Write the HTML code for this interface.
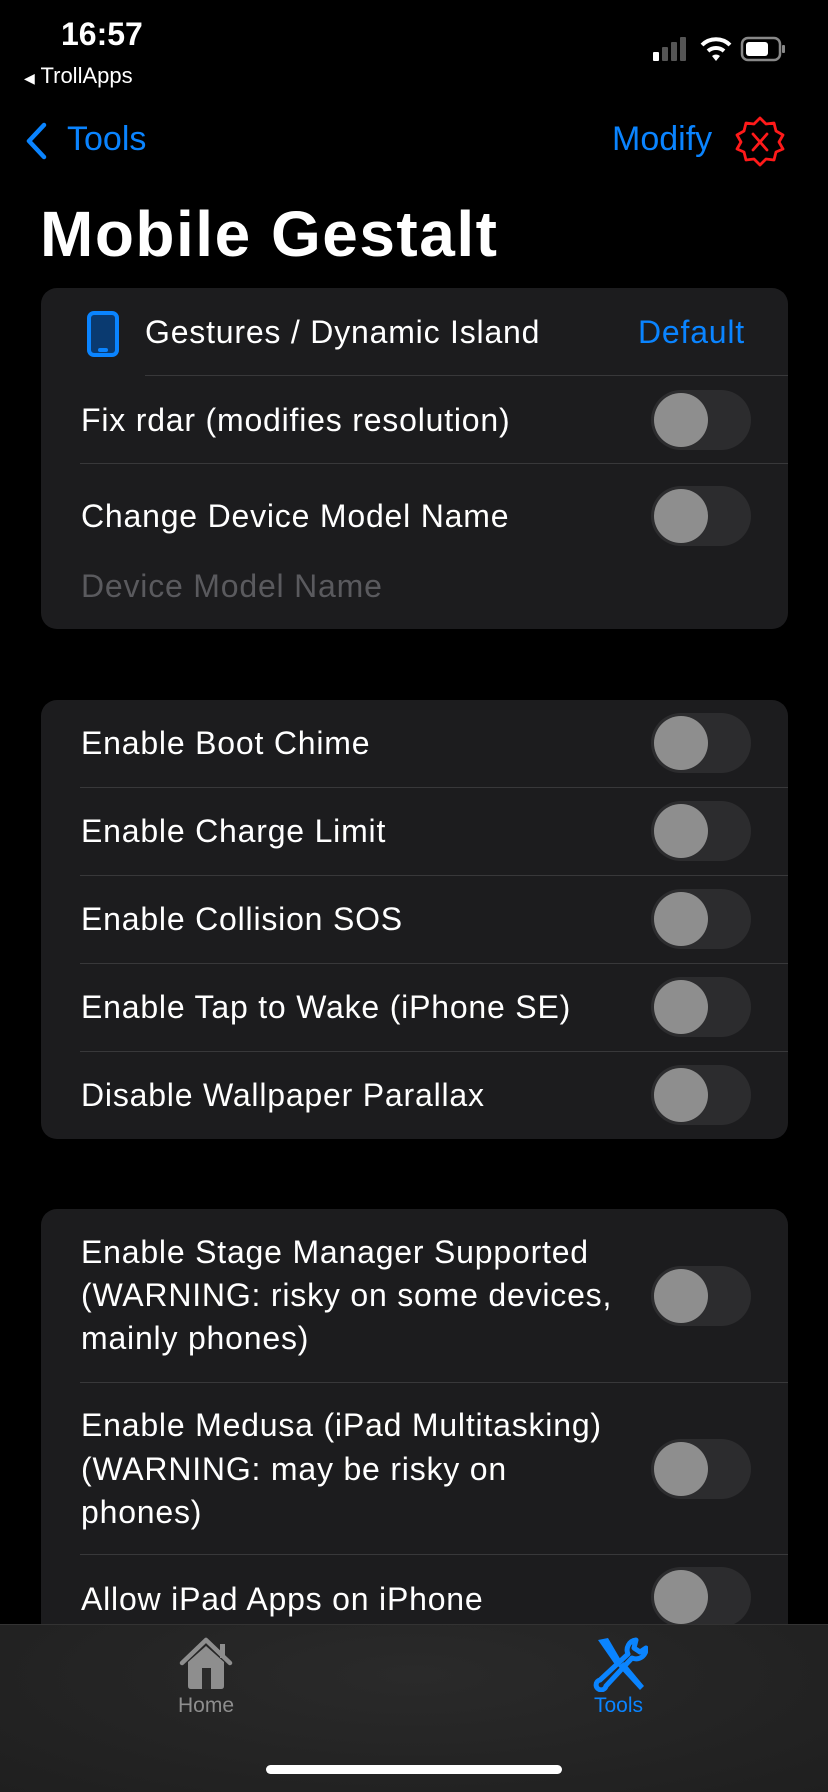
<!DOCTYPE html>
<html><head><meta charset="utf-8"><style>
*{margin:0;padding:0;box-sizing:border-box}
body{width:828px;height:1792px;background:#000;font-family:"Liberation Sans",sans-serif;color:#fff;position:relative;overflow:hidden}
.a{position:absolute;white-space:nowrap}
.card{position:absolute;left:41px;width:747px;background:#1c1c1e;border-radius:16px;overflow:hidden}
.t{position:absolute;left:40px;font-size:32px;line-height:44px;letter-spacing:0.8px;white-space:nowrap}
.sep{position:absolute;left:39px;right:0;height:1px;background:#38383a}
.tg{position:absolute;left:610px;width:100px;height:60px;border-radius:30px;background:#2c2c2e}
.tg::after{content:"";position:absolute;left:3px;top:3px;width:54px;height:54px;border-radius:50%;background:#8e8e8e}
</style></head><body>
<div class="a" style="left:61px;top:16px;font-size:32px;font-weight:bold">16:57</div>
<div class="a" style="left:24px;top:63px;font-size:22px"><span style="font-size:14px">◀</span> TrollApps</div>
<svg class="a" style="left:652px;top:36px" width="40" height="26"><rect x="1" y="16" width="6" height="9" rx="1" fill="#fff"/><rect x="10" y="11" width="6" height="14" rx="1" fill="#555"/><rect x="19" y="6" width="6" height="19" rx="1" fill="#555"/><rect x="28" y="1" width="6" height="24" rx="1" fill="#555"/></svg>
<svg class="a" style="left:700px;top:36px" width="32" height="26"><path d="M2 9 A20 20 0 0 1 30 9" stroke="#fff" stroke-width="4" fill="none"/><path d="M8 15 A12 12 0 0 1 24 15" stroke="#fff" stroke-width="4" fill="none"/><path d="M12 20 L16 25 L20 20 A6 6 0 0 0 12 20Z" fill="#fff"/></svg>
<svg class="a" style="left:740px;top:36px" width="48" height="26"><rect x="2" y="2" width="38" height="22" rx="6" stroke="#888" stroke-width="2.5" fill="none"/><rect x="6" y="6" width="22" height="14" rx="3" fill="#fff"/><rect x="42" y="9" width="3" height="8" rx="1" fill="#888"/></svg>
<svg class="a" style="left:24px;top:122px" width="24" height="38"><path d="M20 3 L5 19 L20 35" stroke="#0a84ff" stroke-width="4.5" fill="none" stroke-linecap="round" stroke-linejoin="round"/></svg>
<div class="a" style="left:67px;top:120px;font-size:34px;color:#0a84ff">Tools</div>
<div class="a" style="left:612px;top:120px;font-size:34px;color:#0a84ff">Modify</div>
<svg class="a" style="left:734px;top:115px" width="52" height="52" viewBox="0 0 52 52"><path d="M26 3 L32 9 L40 8 L42 16 L49 20 L45 27 L49 34 L42 37 L40 45 L32 44 L26 50 L20 44 L12 45 L10 37 L3 34 L7 27 L3 20 L10 16 L12 8 L20 9 Z" stroke="#ff1a1a" stroke-width="2.8" fill="none" stroke-linejoin="round"/><path d="M19 19 L33 35 M33 19 L19 35" stroke="#ff1a1a" stroke-width="2.8" stroke-linecap="round"/></svg>
<div class="a" style="left:40px;top:197px;font-size:64px;font-weight:bold;letter-spacing:1.5px">Mobile Gestalt</div>
<div class="card" style="top:288px;height:341px">
<svg class="a" style="left:46px;top:23px" width="32" height="46"><rect x="2" y="2" width="28" height="42" rx="5" fill="#0a3a70" stroke="#0a84ff" stroke-width="4"/><rect x="11" y="37" width="10" height="4" rx="2" fill="#0a84ff"/></svg>
<div class="t" style="left:104px;top:22px">Gestures / Dynamic Island</div>
<div class="t" style="left:597px;top:22px;color:#0a84ff">Default</div>
<div class="sep" style="top:87px;left:104px"></div>
<div class="t" style="top:110px">Fix rdar (modifies resolution)</div>
<div class="tg" style="top:102px"></div>
<div class="sep" style="top:175px"></div>
<div class="t" style="top:206px">Change Device Model Name</div>
<div class="tg" style="top:198px"></div>
<div class="t" style="top:276px;color:#5a5a5e">Device Model Name</div>
</div>
<div class="card" style="top:700px;height:439px">
<div class="t" style="top:21px">Enable Boot Chime</div><div class="tg" style="top:13px"></div>
<div class="sep" style="top:87px"></div>
<div class="t" style="top:109px">Enable Charge Limit</div><div class="tg" style="top:101px"></div>
<div class="sep" style="top:175px"></div>
<div class="t" style="top:197px">Enable Collision SOS</div><div class="tg" style="top:189px"></div>
<div class="sep" style="top:263px"></div>
<div class="t" style="top:285px">Enable Tap to Wake (iPhone SE)</div><div class="tg" style="top:277px"></div>
<div class="sep" style="top:351px"></div>
<div class="t" style="top:373px">Disable Wallpaper Parallax</div><div class="tg" style="top:365px"></div>
</div>
<div class="card" style="top:1209px;height:500px">
<div class="t" style="top:21px">Enable Stage Manager Supported</div>
<div class="t" style="top:64px">(WARNING: risky on some devices,</div>
<div class="t" style="top:107px">mainly phones)</div>
<div class="tg" style="top:57px"></div>
<div class="sep" style="top:173px"></div>
<div class="t" style="top:194px">Enable Medusa (iPad Multitasking)</div>
<div class="t" style="top:238px">(WARNING: may be risky on</div>
<div class="t" style="top:281px">phones)</div>
<div class="tg" style="top:230px"></div>
<div class="sep" style="top:345px"></div>
<div class="t" style="top:368px">Allow iPad Apps on iPhone</div>
<div class="tg" style="top:358px"></div>
</div>
<div class="a" style="left:0;top:1624px;width:828px;height:168px;background:radial-gradient(ellipse at 50% 30%,#2a2a2a,#1f1f1f);border-top:1px solid #333"></div>
<svg class="a" style="left:178px;top:1636px" width="56" height="54" viewBox="0 0 56 54"><path d="M4 27 L28 4 L52 27" stroke="#8e8e8e" stroke-width="4.5" fill="none" stroke-linecap="round" stroke-linejoin="round"/><rect x="42" y="8" width="5" height="14" fill="#8e8e8e"/><path d="M10 26 L28 10 L46 26 L46 50 Q46 53 43 53 L13 53 Q10 53 10 50Z" fill="#8e8e8e"/><rect x="24" y="32" width="9" height="21" fill="#2a2a2a"/></svg>
<div class="a" style="left:178px;top:1694px;font-size:21px;color:#8e8e8e">Home</div>
<svg class="a" style="left:592px;top:1636px" width="56" height="56" viewBox="0 0 56 56"><path d="M6 4 L16 2 L30 26 L24 30 Z" fill="#0a84ff"/><path d="M26 30 L32 26 L52 50 L48 54 Z" fill="#0a84ff"/><path d="M44 4 A10 10 0 0 0 36 18 L8 44 A5 5 0 1 0 14 50 L40 22 A10 10 0 0 0 54 12 L48 16 L42 12 Z" fill="none" stroke="#0a84ff" stroke-width="5" stroke-linejoin="round"/></svg>
<div class="a" style="left:594px;top:1694px;font-size:21px;color:#0a84ff">Tools</div>
<div class="a" style="left:266px;top:1765px;width:296px;height:9px;border-radius:5px;background:#fff"></div>
</body></html>
